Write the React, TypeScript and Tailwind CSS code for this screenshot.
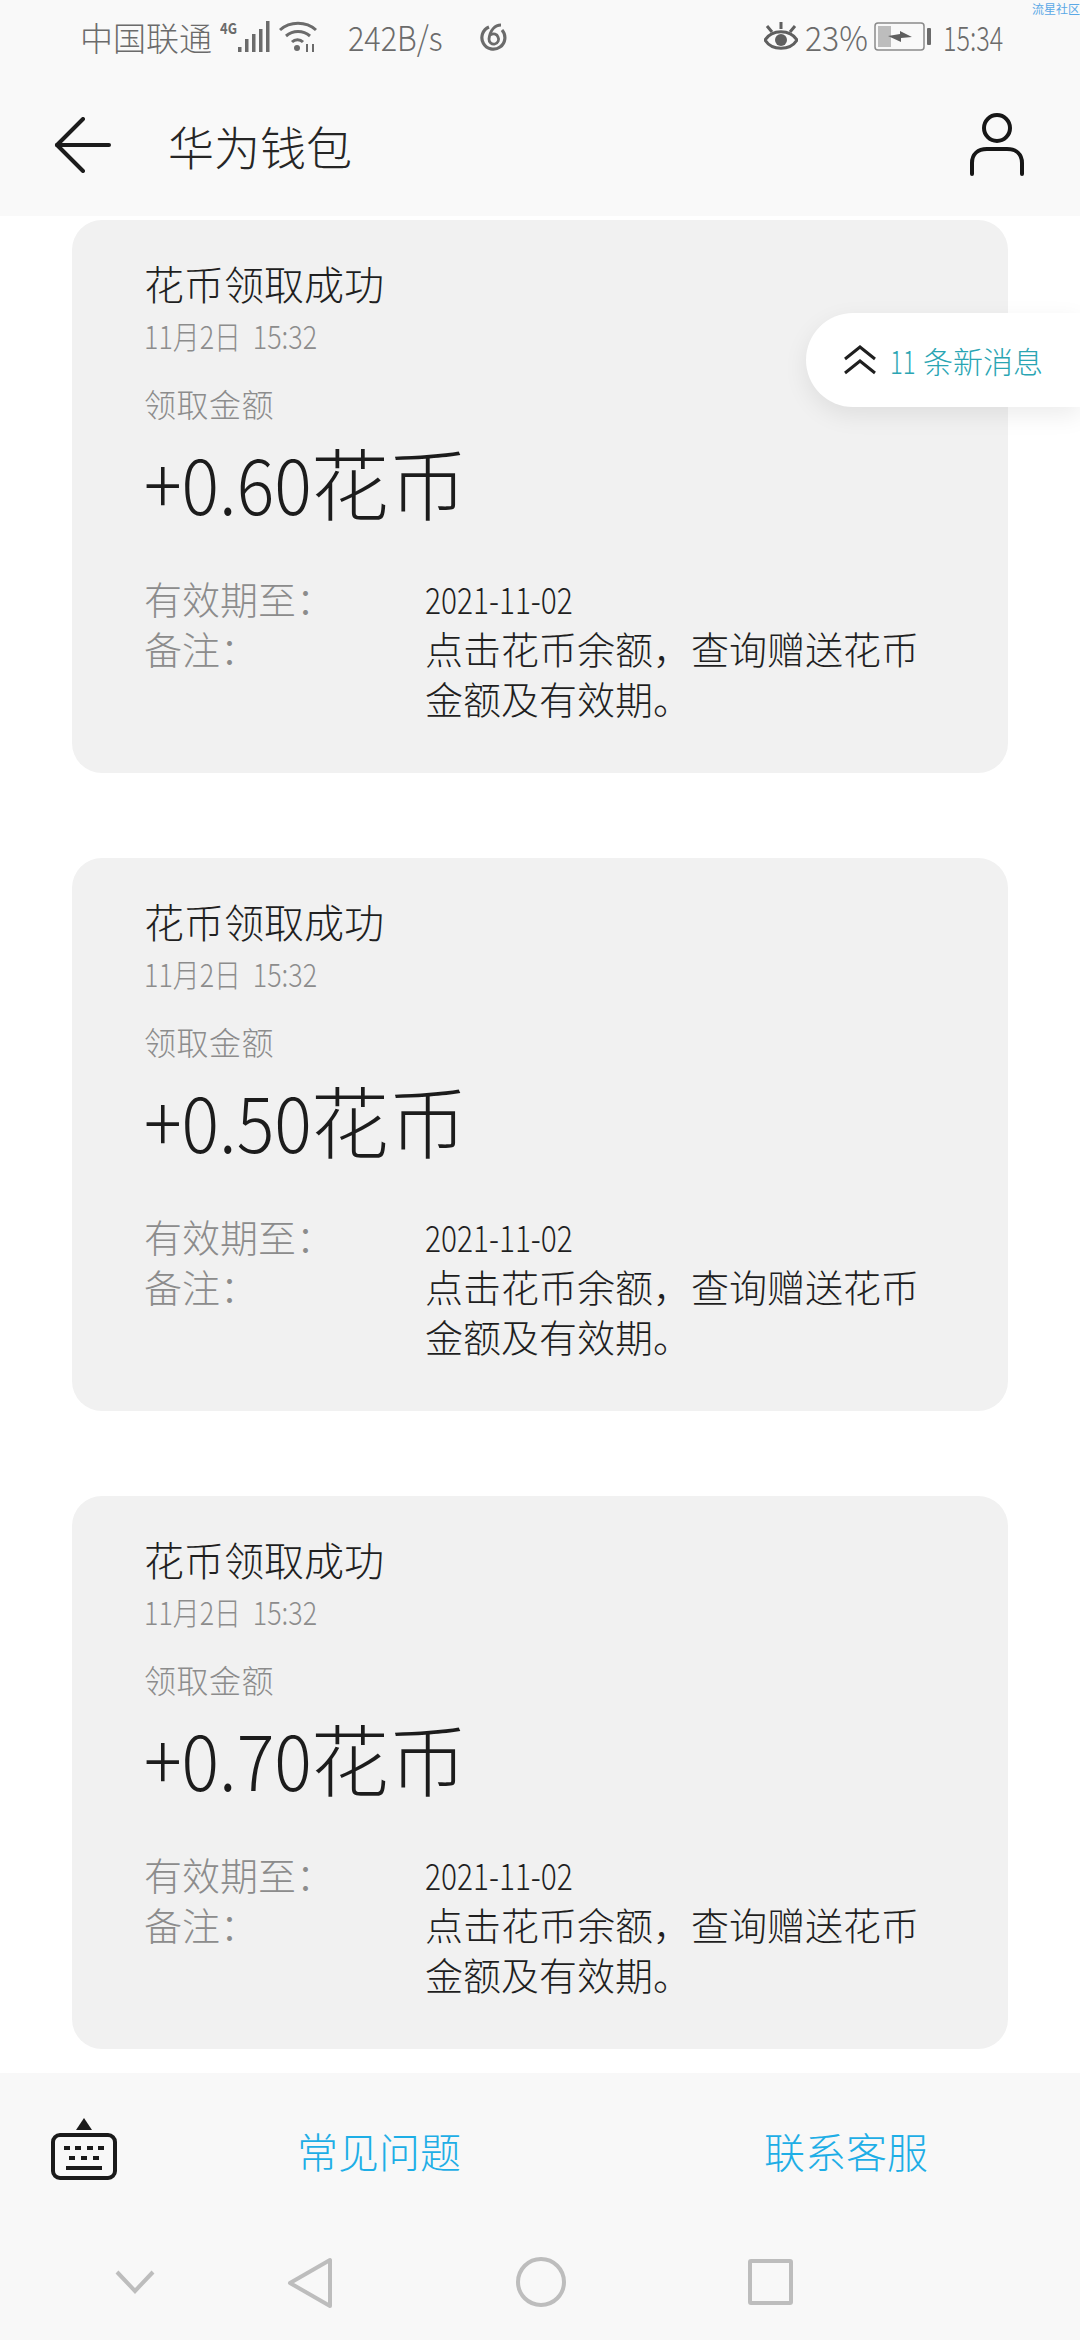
const cards = ["+0.60", "+0.50", "+0.70"]

function StatusBar() {
    return (
        <div className="h-[74px] flex items-center justify-between pl-[80px] pr-[77px] text-[#6b6b6b]">
            <div className="flex items-center">
                <span className="text-[33px] font-light leading-none">中国联通</span>
                <svg className="ml-[8px]" width="50" height="46" viewBox="0 -6 50 46" fill="#6b6b6b">
                    <text x="0" y="14" fontSize="15" fontWeight="700" fontFamily="Noto Sans CJK SC" textLength="17" lengthAdjust="spacingAndGlyphs">4G</text>
                    <rect x="18" y="27" width="3.5" height="5" />
                    <rect x="25" y="19" width="3.5" height="13" />
                    <rect x="32" y="14" width="3.5" height="18" />
                    <rect x="39" y="9" width="3.5" height="23" />
                    <rect x="46" y="1" width="3.5" height="31" />
                </svg>
                <svg className="ml-[9px]" width="38" height="32" viewBox="0 0 38 32" fill="none" stroke="#6b6b6b" strokeWidth="3">
                    <path d="M1 9 C11 0 27 0 37 9" />
                    <path d="M7 15 C14 9 24 9 31 15" />
                    <path d="M13 21 C16 18 21 18 24 21" />
                    <circle cx="18" cy="27" r="3" fill="#6b6b6b" stroke="none" />
                    <path d="M28 23 V31 M34 23 V31" strokeWidth="2" />
                </svg>
                <span className="inline-block w-[96px] ml-[31px] origin-left scale-x-[0.9] text-[34px] font-light leading-none whitespace-nowrap">242B/s</span>
                <svg className="ml-[36px]" width="28" height="30" viewBox="0 0 28 30" fill="none" stroke="#6b6b6b" strokeWidth="3.2">
                    <path d="M9 5 A11.5 11.5 0 1 0 22 8" />
                    <path d="M21 3 C15 3 10 8 9 17 A4.8 4.8 0 1 0 18 15 C17 12 14 11 10 13" strokeWidth="2.8" />
                </svg>
            </div>
            <div className="flex items-center">
                <svg width="34" height="32" viewBox="0 0 34 32" fill="none">
                    <path d="M1 19 C8 8 26 8 33 19 C26 30 8 30 1 19 Z" stroke="#5f5f5f" strokeWidth="3" />
                    <circle cx="17" cy="19" r="6" fill="#5f5f5f" />
                    <path d="M17 1 V8 M3 5 L8 11 M31 5 L26 11" stroke="#5f5f5f" strokeWidth="3" />
                </svg>
                <span className="inline-block w-[60px] ml-[7px] origin-left scale-x-[0.94] text-[34px] font-light leading-none whitespace-nowrap">23%</span>
                <svg className="ml-[9px]" width="58" height="30" viewBox="0 0 58 30" fill="none">
                    <rect x="1" y="1" width="49" height="27" rx="3" stroke="#8a8a8a" strokeWidth="1.5" />
                    <rect x="4" y="4" width="13" height="21" fill="#bdbdbd" />
                    <path d="M14 14 L26 12 L26 9 L38 15 L27 16 L27 20 Z" fill="#5f5f5f" />
                    <rect x="53" y="6" width="4" height="17" rx="1" fill="#6b6b6b" />
                </svg>
                <span className="inline-block w-[60px] ml-[11px] origin-left scale-x-[0.74] text-[34px] font-light leading-none whitespace-nowrap">15:34</span>
            </div>
        </div>
    )
}

function Card({ amount }: { amount: string }) {
    return (
        <div className="w-[936px] h-[553px] bg-[#f1f1f1] rounded-[30px] pl-[72px] pt-[39px]">
            <div className="text-[40px] leading-[48px] font-light text-[#1f1f1f]">花币领取成功</div>
            <div className="mt-[8px] origin-left scale-x-[0.84] text-[32px] leading-[40px] font-light text-[#8c8c8c] whitespace-nowrap">11月2日&nbsp;&nbsp;15:32</div>
            <div className="mt-[28px] text-[32px] tracking-[0.5px] leading-[40px] font-light text-[#8c8c8c]">领取金额</div>
            <div className="mt-[8px] h-[100px] flex items-center font-light text-[#1c1c1c]">
                <span className="inline-block w-[167px] origin-left scale-x-[0.9] text-[78px] leading-[100px] whitespace-nowrap">{amount}</span>
                <span className="text-[78px] leading-[100px]">花币</span>
            </div>
            <div className="mt-[42px] grid grid-cols-[281px_510px] text-[38px] leading-[50px] font-light">
                <div className="text-[#8c8c8c]">{"有效期至\uFF1A"}</div>
                <div className="origin-left scale-x-[0.83] text-[#1f1f1f] text-[36px] whitespace-nowrap">2021-11-02</div>
                <div className="text-[#8c8c8c]">{"备注\uFF1A"}</div>
                <div className="text-[#1f1f1f]">{"点击花币余额\uFF0C查询赠送花币金额及有效期\u3002"}</div>
            </div>
        </div>
    )
}

export default function App() {
    return (
        <div className="relative w-[1080px] h-[2340px] bg-white flex flex-col overflow-hidden font-['Noto_Sans_CJK_SC',sans-serif]">
            <span className="absolute top-0 right-0 text-[12px] leading-[17px] text-[#5aa8e6]">流星社区</span>

            <header className="h-[216px] shrink-0 bg-[#f9f9f9]">
                <StatusBar />
                <div className="h-[142px] flex items-center justify-between pl-[54px] pr-[55px]">
                    <div className="flex items-center">
                        <svg width="58" height="56" viewBox="0 0 58 56" fill="none" stroke="#1c1c1c" strokeWidth="4" strokeLinecap="round" strokeLinejoin="round">
                            <path d="M29 2 L3 28 L29 54" />
                            <path d="M3 28 H55" />
                        </svg>
                        <span className="ml-[56px] text-[46px] leading-none font-light text-[#262626]">华为钱包</span>
                    </div>
                    <svg width="56" height="64" viewBox="0 0 56 64" fill="none" stroke="#171717" strokeWidth="4" strokeLinecap="round">
                        <circle cx="28" cy="15" r="13" />
                        <path d="M3 61 V50 C3 41 9 36 18 36 H38 C47 36 53 41 53 50 V61" />
                    </svg>
                </div>
            </header>

            <main className="flex-1 flex flex-col items-center gap-[85px] pt-[4px] overflow-hidden">
                {cards.map((amount, i) => (
                    <Card key={i} amount={amount} />
                ))}
            </main>

            <div className="absolute top-[313px] left-[806px] w-[274px] h-[94px] bg-white rounded-l-[47px] shadow-[0_8px_24px_rgba(0,0,0,0.08)] flex items-center pl-[37px]">
                <svg width="34" height="30" viewBox="0 0 34 30" fill="none" stroke="#1f1f1f" strokeWidth="3">
                    <path d="M2 14 L17 2 L32 14" />
                    <path d="M2 28 L17 16 L32 28" />
                </svg>
                <span className="inline-block w-[33px] ml-[13px] origin-left scale-x-[0.75] text-[32px] leading-none font-light text-[#2aa5b3]">11</span>
                <span className="text-[30px] leading-none font-light text-[#2aa5b3] whitespace-nowrap">条新消息</span>
            </div>

            <footer className="h-[267px] shrink-0 bg-[#f8f8f8]">
                <div className="h-[154px] flex items-center pl-[51px]">
                    <svg className="mb-[2px]" width="66" height="62" viewBox="0 0 66 62" fill="#1a1a1a">
                        <path d="M33 0 L41 12 H25 Z" />
                        <rect x="2" y="17" width="62" height="43" rx="7" fill="none" stroke="#1a1a1a" strokeWidth="4" />
                        <rect x="13" y="28" width="6" height="4" />
                        <rect x="24" y="28" width="6" height="4" />
                        <rect x="36" y="28" width="6" height="4" />
                        <rect x="47" y="28" width="6" height="4" />
                        <rect x="18" y="38" width="6" height="4" />
                        <rect x="30" y="38" width="6" height="4" />
                        <rect x="42" y="38" width="6" height="4" />
                        <rect x="15" y="48" width="36" height="4" />
                    </svg>
                    <span className="ml-[180px] text-[41px] leading-none font-light text-[#1eaee6]">常见问题</span>
                    <span className="ml-[303px] text-[41px] leading-none font-light text-[#1eaee6]">联系客服</span>
                </div>
                <div className="h-[113px] flex items-start pl-[115px] pt-[30px]">
                    <svg className="mt-[13px]" width="40" height="24" viewBox="0 0 40 24" fill="none" stroke="#bdbdbd" strokeWidth="4">
                        <path d="M2 2 L20 21 L38 2" />
                    </svg>
                    <svg className="ml-[132px]" width="46" height="52" viewBox="0 0 46 52" fill="none" stroke="#bdbdbd" strokeWidth="4" strokeLinejoin="round">
                        <path d="M43 3 V49 L3 26 Z" />
                    </svg>
                    <div className="ml-[183px] w-[50px] h-[50px] rounded-full border-4 border-[#bdbdbd]" />
                    <div className="ml-[182px] mt-[2px] w-[45px] h-[46px] rounded-[3px] border-4 border-[#bdbdbd]" />
                </div>
            </footer>
        </div>
    )
}
